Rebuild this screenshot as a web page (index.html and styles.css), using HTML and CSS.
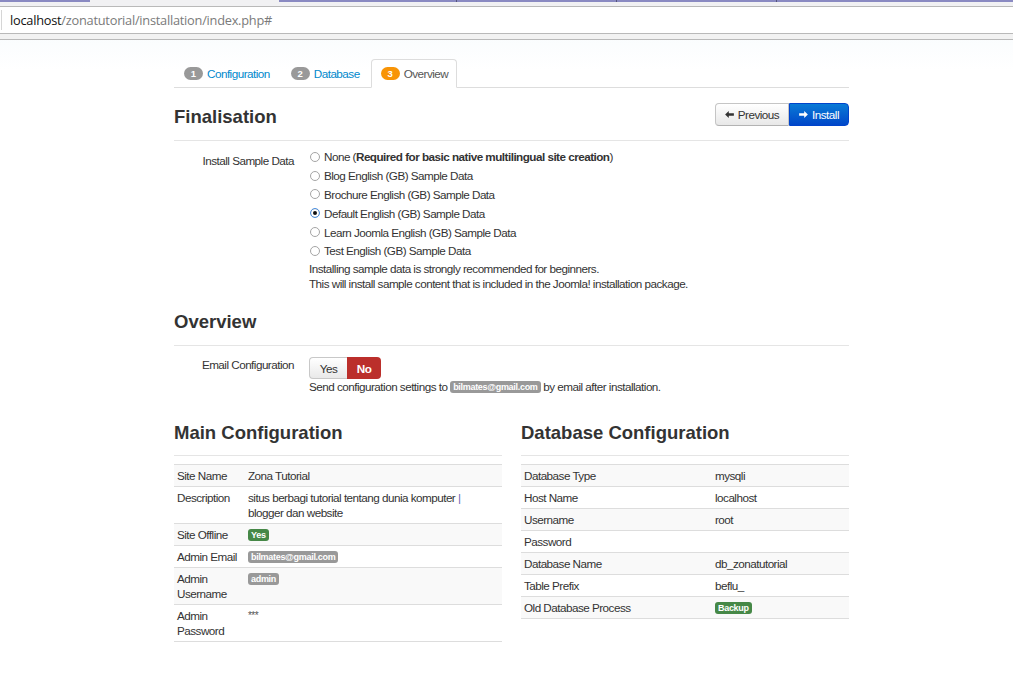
FILE: index.html
```html
<!DOCTYPE html>
<html lang="en">
<head>
<meta charset="utf-8">
<title>Joomla! Installation</title>
<link rel="stylesheet" href="styles.css">
</head>
<body>
<div class="chrome">
  <div class="chrome-tabs">
    <span class="ctab ctab-a"></span>
    <span class="ctab ctab-gap"></span>
    <span class="ctab ctab-b"></span>
    <span class="ctab ctab-c"></span>
    <span class="ctab ctab-c"></span>
    <span class="ctab ctab-d"></span>
  </div>
  <div class="urlbar">
    <span class="url-sep"></span>
    <span class="url"><span class="url-host">localhost</span>/zonatutorial/installation/index.php#</span>
  </div>
  <div class="chrome-band"></div>
</div>

<main class="container">
  <ul class="nav-tabs">
    <li><a href="#"><span class="badge">1</span>Configuration</a></li>
    <li><a href="#"><span class="badge">2</span>Database</a></li>
    <li class="active"><a href="#"><span class="badge badge-warning">3</span>Overview</a></li>
  </ul>

  <div class="page-header">
    <h3 class="title">Finalisation</h3>
    <div class="btn-group">
      <a class="btn" href="#"><svg class="ico" viewBox="0 0 10 8" width="9" height="7"><path d="M0 4L4.2 0V2.6H10V5.4H4.2V8Z" fill="#333"/></svg>Previous</a>
      <a class="btn btn-primary" href="#"><svg class="ico" viewBox="0 0 10 8" width="9" height="7"><path d="M10 4L5.8 0V2.6H0V5.4H5.8V8Z" fill="#fff"/></svg>Install</a>
    </div>
  </div>

  <div class="control-group cg-sample">
    <div class="control-label">Install Sample Data</div>
    <div class="controls">
      <label class="radio"><span class="rdo"></span><span>None (<b>Required for basic native multilingual site creation</b>)</span></label>
      <label class="radio"><span class="rdo"></span><span>Blog English (GB) Sample Data</span></label>
      <label class="radio"><span class="rdo"></span><span>Brochure English (GB) Sample Data</span></label>
      <label class="radio"><span class="rdo checked"></span><span>Default English (GB) Sample Data</span></label>
      <label class="radio"><span class="rdo"></span><span>Learn Joomla English (GB) Sample Data</span></label>
      <label class="radio"><span class="rdo"></span><span>Test English (GB) Sample Data</span></label>
      <p class="help-block help-sample">Installing sample data is strongly recommended for beginners.<br>This will install sample content that is included in the Joomla! installation package.</p>
    </div>
  </div>

  <h3 class="title section-title">Overview</h3>

  <div class="control-group cg-email">
    <div class="control-label">Email Configuration</div>
    <div class="controls">
      <div class="toggle">
        <span class="tbtn tbtn-yes">Yes</span><span class="tbtn tbtn-no">No</span>
      </div>
      <p class="help-block">Send configuration settings to <span class="label">bilmates@gmail.com</span> by email after installation.</p>
    </div>
  </div>

  <div class="cols">
    <section class="col">
      <h3 class="title section-title col-title">Main Configuration</h3>
      <table class="table table-main">
        <colgroup><col class="k"><col></colgroup>
        <tbody>
          <tr><td>Site Name</td><td>Zona Tutorial</td></tr>
          <tr><td>Description</td><td>situs berbagi tutorial tentang dunia komputer <span class="pipe">|</span><br>blogger dan website</td></tr>
          <tr><td>Site Offline</td><td><span class="label label-success">Yes</span></td></tr>
          <tr><td>Admin Email</td><td><span class="label">bilmates@gmail.com</span></td></tr>
          <tr><td>Admin Username</td><td><span class="label">admin</span></td></tr>
          <tr><td>Admin Password</td><td class="stars">***</td></tr>
        </tbody>
      </table>
    </section>
    <section class="col">
      <h3 class="title section-title col-title">Database Configuration</h3>
      <table class="table table-db">
        <colgroup><col class="k"><col></colgroup>
        <tbody>
          <tr><td>Database Type</td><td>mysqli</td></tr>
          <tr><td>Host Name</td><td>localhost</td></tr>
          <tr><td>Username</td><td>root</td></tr>
          <tr><td>Password</td><td></td></tr>
          <tr><td>Database Name</td><td>db_zonatutorial</td></tr>
          <tr><td>Table Prefix</td><td>beflu_</td></tr>
          <tr><td>Old Database Process</td><td><span class="label label-success">Backup</span></td></tr>
        </tbody>
      </table>
    </section>
  </div>
</main>
</body>
</html>
```

FILE: styles.css
```css
* { box-sizing: border-box; }

html, body { margin: 0; padding: 0; }

body {
  font-family: "Liberation Sans", Arial, sans-serif;
  font-size: 11.7px;
  letter-spacing: -0.52px;
  line-height: 15px;
  color: #333;
  background: linear-gradient(#f4f9fc, #ffffff 70px) no-repeat, #fff;
  min-height: 677px;
}

/* ---------- browser chrome ---------- */
.chrome-tabs {
  display: flex;
  height: 7px;
  background: #f1f1f3;
  border-bottom: 1px solid #b9b9b9;
}
.ctab { height: 2px; background: #8a8ac2; }
.ctab-a { width: 90px; }
.ctab-gap { width: 189px; background: transparent; }
.ctab-b { width: 178px; border-right: 1px solid #55557a; }
.ctab-c { width: 160px; border-right: 1px solid #55557a; }
.ctab-d { flex: 1; }

.urlbar {
  display: flex;
  align-items: center;
  height: 27px;
  padding-left: 1px;
  background: #fff;
  border-bottom: 1px solid #b9b9b9;
  font-family: "Open Sans", "Noto Sans", sans-serif;
  font-size: 12.8px;
  letter-spacing: -0.25px;
  color: #7a7a7a;
}
.url-sep { width: 1px; height: 20px; background: #d6d6d6; margin-right: 8px; }
.url-host { color: #111; }

.chrome-band {
  height: 6px;
  background: #f2f2f2;
  border-bottom: 1px solid #b9b9b9;
}

/* ---------- page ---------- */
.container {
  width: 675px;
  margin: 19px 0 0 174px;
}

.nav-tabs {
  display: flex;
  list-style: none;
  margin: 0;
  padding: 0;
  border-bottom: 1px solid #ddd;
}
.nav-tabs li { margin: 0 2px -1px 0; }
.nav-tabs a {
  display: flex;
  align-items: center;
  gap: 4px;
  height: 29px;
  padding: 0 8px 0 9px;
  border: 1px solid transparent;
  border-radius: 4px 4px 0 0;
  color: #0088cc;
  text-decoration: none;
}
.nav-tabs .active a {
  background: #fff;
  border-color: #ddd #ddd transparent;
  color: #555;
}

.badge {
  display: inline-block;
  min-width: 19px;
  height: 13px;
  padding: 0 5px;
  border-radius: 7px;
  background: #999;
  color: #fff;
  font-size: 9.5px;
  font-weight: bold;
  line-height: 13px;
  letter-spacing: 0;
  text-align: center;
}
.badge-warning { background: #f89406; }

.title {
  margin: 0;
  font-size: 18.5px;
  font-weight: bold;
  line-height: 24px;
  letter-spacing: 0;
  color: #333;
}

.page-header {
  display: flex;
  justify-content: space-between;
  align-items: flex-start;
  margin-top: 15px;
  padding-bottom: 10.5px;
  border-bottom: 1px solid #e5e5e5;
}
.page-header .title { margin-top: 2px; }

.btn-group { display: flex; }
.btn {
  display: flex;
  align-items: center;
  gap: 4px;
  height: 23px;
  padding: 0 9px;
  border: 1px solid #c5c5c5;
  border-bottom-color: #b3b3b3;
  border-radius: 4px 0 0 4px;
  background: linear-gradient(#ffffff, #e8e8e8);
  color: #333;
  text-decoration: none;
}
.btn-primary {
  border-color: #0044cc;
  border-radius: 0 4px 4px 0;
  background: linear-gradient(#0a7bd6, #0047c9);
  color: #fff;
}
.ico { display: block; }

.section-title {
  margin-top: 19px;
  padding-bottom: 11px;
  border-bottom: 1px solid #e5e5e5;
}

.control-group {
  display: grid;
  grid-template-columns: 120px 1fr;
  column-gap: 15px;
}
.control-label { text-align: right; }
.cg-sample { margin-top: 7px; }
.cg-sample .control-label { padding-top: 5px; }
.cg-email { margin-top: 11px; }

.radio {
  display: flex;
  align-items: center;
  gap: 4px;
  height: 18.8px;
}
.rdo {
  width: 10px;
  height: 10px;
  margin-left: 1px;
  border: 1px solid #a5a5a5;
  border-radius: 50%;
  background: #fff;
  flex: none;
}
.rdo.checked {
  border-color: #4a8fe0;
  box-shadow: inset 0 0 0 2px #fff, inset 0 0 0 5px #111;
}

.help-block { margin: 0; line-height: 15px; }
.help-sample { margin-top: 1px; }

.toggle { display: flex; height: 22px; }
.tbtn {
  display: flex;
  align-items: center;
  justify-content: center;
  height: 22px;
}
.tbtn-yes {
  width: 38px;
  border: 1px solid #c8c8c8;
  border-right: 0;
  border-radius: 4px 0 0 4px;
  background: linear-gradient(#ffffff, #e9e9e9);
  color: #333;
}
.tbtn-no {
  width: 34px;
  border-radius: 0 4px 4px 0;
  background: #bb2f2b;
  color: #fff;
  font-weight: bold;
}

.label {
  display: inline-block;
  padding: 0 3px;
  border-radius: 3px;
  background: #999;
  color: #fff;
  font-size: 9px;
  font-weight: bold;
  line-height: 12px;
  letter-spacing: -0.3px;
  vertical-align: 1px;
}
.label-success { background: #468847; }

.cols {
  display: grid;
  grid-template-columns: 328px 328px;
  column-gap: 19px;
}
.col-title { margin-top: 27px; padding-bottom: 10px; }

.table {
  width: 100%;
  margin-top: 8px;
  border-collapse: collapse;
  table-layout: fixed;
}
.table td {
  padding: 3px 3px;
  line-height: 15px;
  vertical-align: top;
  border-top: 1px solid #ddd;
}
.table tr:last-child td { border-bottom: 1px solid #ddd; }
.table tr:nth-child(odd) td { background: #f9f9f9; }
.table-main col.k { width: 71px; }
.table-db col.k { width: 191px; }
.pipe { color: #6b63b5; }
.stars { font-size: 10px; color: #555; }
```
